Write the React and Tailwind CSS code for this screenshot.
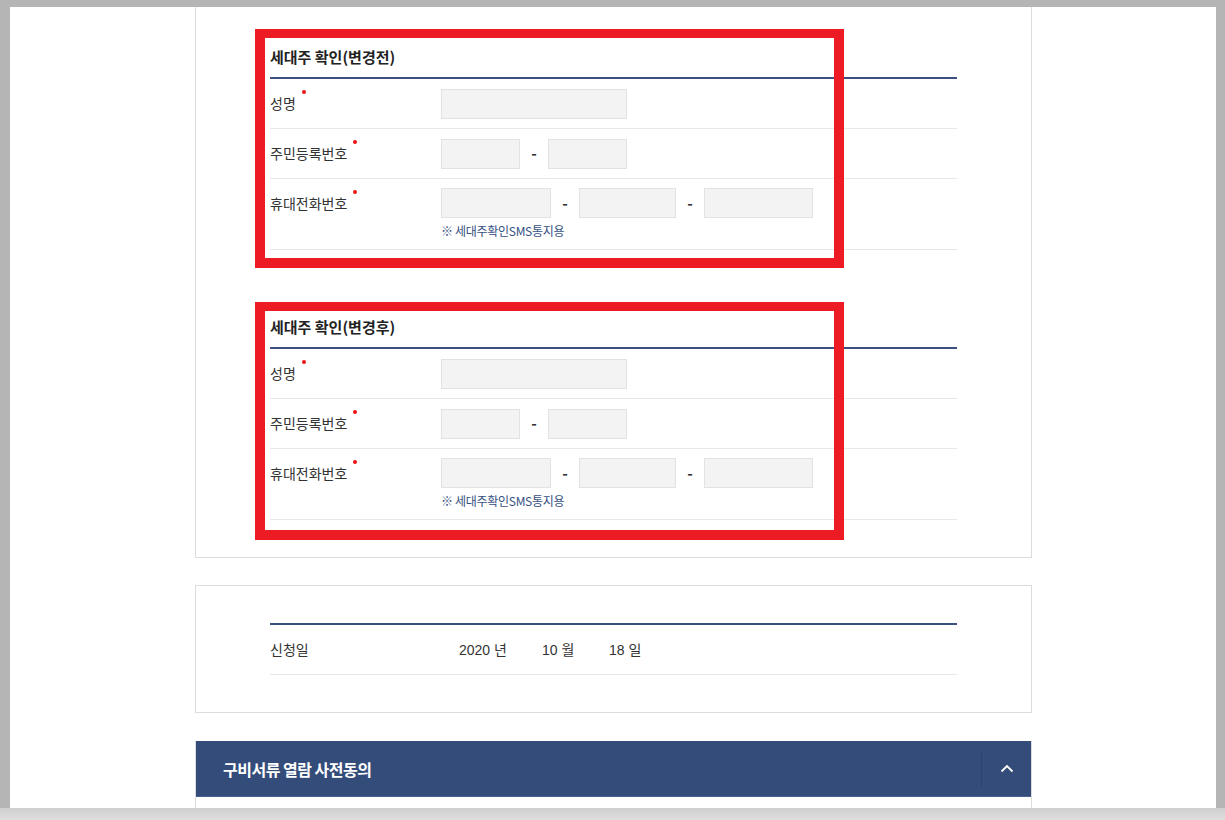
import React from 'react';

const FONT = { fontFamily: '"Noto Sans CJK KR", "Noto Sans", sans-serif' };

function Req({ children }) {
  return (
    <span className="relative inline-block">
      {children}
      <span className="absolute -right-[10px] -top-[3px] h-[4px] w-[4px] rounded-full bg-[#ee1111]" />
    </span>
  );
}

function Field({ w }) {
  return <div className={`h-[30px] border border-[#e2e2e2] bg-[#f3f3f3] ${w}`} />;
}

function Dash() {
  return <span className="w-[28px] text-center text-[15px] font-bold text-[#333]">-</span>;
}

/* one "세대주 확인" block: title, navy rule, three rows */
function HolderSection({ title, className }) {
  return (
    <div className={`relative ${className}`}>
      <div className="flex h-[42px] items-center border-b-2 border-[#3b5080] text-[15px] font-bold text-[#222]">
        {title}
      </div>
      <div className="flex h-[50px] items-center border-b border-[#e8e8e8]">
        <div className="w-[171px] text-[14px] text-[#333]"><Req>성명</Req></div>
        <Field w="w-[186px]" />
      </div>
      <div className="flex h-[50px] items-center border-b border-[#e8e8e8]">
        <div className="w-[171px] text-[14px] text-[#333]"><Req>주민등록번호</Req></div>
        <Field w="w-[79px]" />
        <Dash />
        <Field w="w-[79px]" />
      </div>
      <div className="flex border-b border-[#e8e8e8] pb-[11px] pt-[9px]">
        <div className="flex h-[30px] w-[171px] items-center text-[14px] text-[#333]"><Req>휴대전화번호</Req></div>
        <div>
          <div className="flex items-center">
            <Field w="w-[110px]" />
            <Dash />
            <Field w="w-[97px]" />
            <Dash />
            <Field w="w-[109px]" />
          </div>
          <div className="mt-[6px] h-[14px] text-[12px] leading-[14px] tracking-[-0.3px] text-[#34507f]">※ 세대주확인SMS통지용</div>
        </div>
      </div>
    </div>
  );
}

export default function App() {
  return (
    <div className="h-[820px] w-[1225px] overflow-hidden bg-[#b5b5b5]" style={FONT}>
      <div className="ml-[10px] mt-[7px] h-[801px] w-[1206px] overflow-hidden bg-white">
        <div className="ml-[185px] w-[837px]">
          {/* card 1 */}
          <div className="relative border-x border-b border-[#dcdcdc] px-[74px] pb-[37px] pt-[30px]">
            <HolderSection title="세대주 확인(변경전)" />
            <HolderSection title="세대주 확인(변경후)" className="mt-[57px]" />
            {/* red annotation boxes */}
            <div className="pointer-events-none absolute left-[59px] top-[22px] h-[239px] w-[589px] border-[10px] border-t-[9px] border-[#ed1c24]" />
            <div className="pointer-events-none absolute left-[59px] top-[295px] h-[238px] w-[589px] border-[10px] border-t-[9px] border-[#ed1c24]" />
          </div>

          {/* card 2 */}
          <div className="mt-[27px] border border-[#dcdcdc] px-[74px] pb-[37px] pt-[37px]">
            <div className="flex h-[52px] items-center border-b border-t-2 border-[#e8e8e8] border-t-[#3b5080] text-[14px] text-[#333]">
              <div className="w-[189px]">신청일</div>
              <div className="flex" style={{ fontFamily: '"Liberation Sans", "Noto Sans CJK KR", sans-serif' }}>
                <span className="w-[83px]">2020 <span style={FONT}>년</span></span>
                <span className="w-[67px]">10 <span style={FONT}>월</span></span>
                <span>18 <span style={FONT}>일</span></span>
              </div>
            </div>
          </div>

          {/* accordion */}
          <div className="mt-[28px] border-x border-[#dcdcdc]">
            <div className="flex h-[55px] items-center bg-[#344c79] pl-[27px]">
              <div className="flex-1 text-[16px] font-bold tracking-[-0.5px] text-white">구비서류 열람 사전동의</div>
              <div className="flex h-[36px] w-[50px] items-center justify-center border-l border-[#2c4270]">
                <svg width="14" height="9" viewBox="0 0 14 9" fill="none">
                  <path d="M1.5 7.5 L7 2 L12.5 7.5" stroke="#fff" strokeWidth="1.8" />
                </svg>
              </div>
            </div>
            <div className="h-[20px] border-t border-[#4a6090]" />
          </div>
        </div>
      </div>
      <div className="h-[12px] bg-gradient-to-b from-[#cfcfcf] to-[#dedede]" />
    </div>
  );
}
